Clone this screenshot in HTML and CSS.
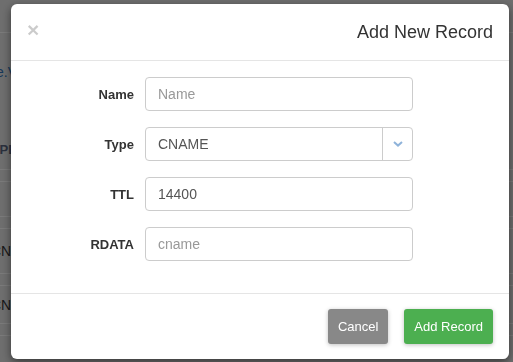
FILE: index.html
```html
<!DOCTYPE html>
<html lang="en">
<head>
    <meta charset="UTF-8">
    <meta name="viewport" content="width=device-width, initial-scale=1.0">
    <title>Add New Record</title>
    <link rel="stylesheet" href="styles.css">
</head>
<body>
    <div class="page">
        <div class="topbar"></div>
        <div class="crumb"><a href="#">e.V</a></div>
        <div class="row row-head"><span class="cell cell-type">TYPE</span></div>
        <div class="row row-gap"></div>
        <div class="row row-a"></div>
        <div class="row row-gap"></div>
        <div class="row row-b"><span class="cell cell-val">CNAME</span></div>
        <div class="row row-gap"></div>
        <div class="row row-c"><span class="cell cell-val">CNAME</span></div>
        <div class="row row-gap"></div>
    </div>

    <div class="backdrop">
        <div class="modal">
            <div class="modal-header">
                <button class="close" type="button">&times;</button>
                <h4 class="modal-title">Add New Record</h4>
            </div>
            <div class="modal-body">
                <div class="form-group">
                    <label>Name</label>
                    <div class="input placeholder">Name</div>
                </div>
                <div class="form-group">
                    <label>Type</label>
                    <div class="input select">
                        <span class="select-value">CNAME</span>
                        <span class="select-arrow">
                            <svg width="10" height="6" viewBox="0 0 10 6">
                                <path d="M1 1 L5 4.6 L9 1" fill="none" stroke="#8fb3da" stroke-width="2"/>
                            </svg>
                        </span>
                    </div>
                </div>
                <div class="form-group">
                    <label>TTL</label>
                    <div class="input">14400</div>
                </div>
                <div class="form-group">
                    <label>RDATA</label>
                    <div class="input placeholder">cname</div>
                </div>
            </div>
            <div class="modal-footer">
                <button class="btn btn-cancel" type="button">Cancel</button>
                <button class="btn btn-add" type="button">Add Record</button>
            </div>
        </div>
    </div>
</body>
</html>
```

FILE: styles.css
```css
body {
    margin: 0;
    font-family: "Liberation Sans", Arial, sans-serif;
    font-size: 14px;
    color: #333;
    background: #dcdcdc;
    overflow: hidden;
}
.page {
    height: 362px;
}
.topbar {
    height: 32px;
    border-bottom: 1px solid #f4f4f4;
}
.crumb {
    height: 80px;
    line-height: 78px;
}
.crumb a {
    margin-left: -4px;
    color: #2f6fb0;
    text-decoration: none;
    font-size: 14px;
}
.row {
    border-bottom: 1px solid #f4f4f4;
    display: flex;
    align-items: center;
}
.row-head {
    height: 56px;
    align-items: flex-end;
}
.row-gap { height: 11px; }
.row-a { height: 34px; }
.row-b { height: 44px; }
.row-c { height: 37px; }
.cell-type {
    margin-left: -17px;
    margin-bottom: 12px;
    font-weight: bold;
    font-size: 13px;
    color: #55607a;
}
.cell-val {
    margin-left: -9px;
    color: #333;
}

.backdrop {
    position: fixed;
    top: 0;
    left: 0;
    right: 0;
    bottom: 0;
    background: rgba(0,0,0,0.5);
}
.modal {
    margin: 4px 0 0 11px;
    width: 498px;
    height: 355px;
    background: white;
    border-radius: 6px;
    box-shadow: 0 3px 9px rgba(0,0,0,0.5);
    display: flex;
    flex-direction: column;
}
.modal-header {
    height: 57px;
    padding: 0 16px;
    display: flex;
    align-items: center;
    justify-content: space-between;
    border-bottom: 1px solid #e5e5e5;
    box-sizing: border-box;
}
.close {
    border: none;
    background: none;
    padding: 0;
    margin-top: -6px;
    font-family: "Liberation Sans", Arial, sans-serif;
    font-size: 21px;
    font-weight: bold;
    line-height: 1;
    color: #000;
    opacity: 0.2;
}
.modal-title {
    margin: 0;
    font-size: 18px;
    font-weight: normal;
    line-height: 20px;
    color: #333;
}
.modal-body {
    padding: 16px 16px 0;
    height: 233px;
    box-sizing: border-box;
    border-bottom: 1px solid #e5e5e5;
}
.form-group {
    display: grid;
    grid-template-columns: 107px 268px;
    column-gap: 11px;
    align-items: center;
    margin-bottom: 16px;
}
.form-group label {
    text-align: right;
    font-weight: bold;
    font-size: 13px;
    color: #333;
}
.input {
    height: 34px;
    box-sizing: border-box;
    border: 1px solid #ccc;
    border-radius: 4px;
    padding: 0 12px;
    line-height: 32px;
    font-size: 14px;
    color: #555;
}
.placeholder {
    color: #999;
}
.select {
    display: flex;
    padding-right: 0;
}
.select-value {
    flex: 1;
}
.select-arrow {
    width: 29px;
    border-left: 1px solid #ccc;
    display: flex;
    align-items: center;
    justify-content: center;
}
.modal-footer {
    flex: 1;
    display: flex;
    justify-content: flex-end;
    align-items: center;
    gap: 16px;
    padding: 0 16px;
}
.btn {
    height: 35px;
    padding: 0 10px;
    border: none;
    border-radius: 3px;
    font-family: "Liberation Sans", Arial, sans-serif;
    font-size: 13px;
    color: white;
    box-shadow: 0 1px 4px rgba(0,0,0,0.25);
    cursor: pointer;
}
.btn-cancel {
    background: #888;
}
.btn-add {
    background: #4caf50;
}
```
